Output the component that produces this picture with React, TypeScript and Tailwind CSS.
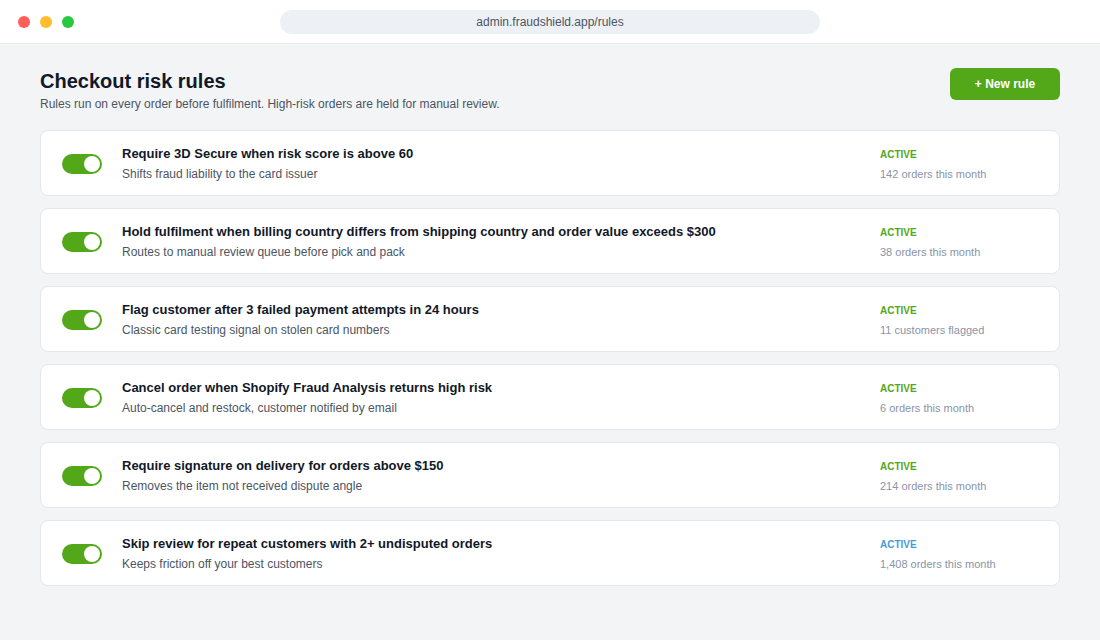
type Rule = {
  title: string;
  desc: string;
  status: 'green' | 'blue';
  stat: string;
};

const rules: Rule[] = [
  { title: 'Require 3D Secure when risk score is above 60', desc: 'Shifts fraud liability to the card issuer', status: 'green', stat: '142 orders this month' },
  { title: 'Hold fulfilment when billing country differs from shipping country and order value exceeds $300', desc: 'Routes to manual review queue before pick and pack', status: 'green', stat: '38 orders this month' },
  { title: 'Flag customer after 3 failed payment attempts in 24 hours', desc: 'Classic card testing signal on stolen card numbers', status: 'green', stat: '11 customers flagged' },
  { title: 'Cancel order when Shopify Fraud Analysis returns high risk', desc: 'Auto-cancel and restock, customer notified by email', status: 'green', stat: '6 orders this month' },
  { title: 'Require signature on delivery for orders above $150', desc: 'Removes the item not received dispute angle', status: 'green', stat: '214 orders this month' },
  { title: 'Skip review for repeat customers with 2+ undisputed orders', desc: 'Keeps friction off your best customers', status: 'blue', stat: '1,408 orders this month' },
];

function Toggle() {
  return (
    <div className="w-10 h-5 rounded-full bg-[#52a818] flex items-center justify-end px-[2px] shrink-0">
      <div className="w-4 h-4 rounded-full bg-white" />
    </div>
  );
}

export default function App() {
  return (
    <div className="w-[1100px] h-[640px] bg-[#f3f4f6] font-['Liberation_Sans',Arial,sans-serif] overflow-hidden">
      {/* Window chrome */}
      <div className="h-11 bg-white border-b border-[#e8ebef] flex items-center px-[18px]">
        <div className="flex gap-[10px]">
          <div className="w-3 h-3 rounded-full bg-[#ff5f57]" />
          <div className="w-3 h-3 rounded-full bg-[#febc2e]" />
          <div className="w-3 h-3 rounded-full bg-[#28c840]" />
        </div>
        <div className="ml-[206px] w-[540px] h-6 rounded-full bg-[#edf1f5] flex items-center justify-center text-xs text-[#4b5563]">
          admin.fraudshield.app/rules
        </div>
      </div>

      <div className="px-10 pt-6">
        {/* Header */}
        <div className="flex items-start justify-between">
          <div>
            <h1 className="text-[20px] leading-[26px] font-bold text-[#111827]">Checkout risk rules</h1>
            <p className="text-xs text-[#4b5563] mt-[2px]">
              Rules run on every order before fulfilment. High-risk orders are held for manual review.
            </p>
          </div>
          <button className="w-[110px] h-8 rounded-md bg-[#52a818] text-white text-xs font-bold">+ New rule</button>
        </div>

        {/* Rules */}
        <div className="mt-[18px] flex flex-col gap-3">
          {rules.map((r) => (
            <div key={r.title} className="h-[66px] bg-white border border-[#e5e7eb] rounded-lg flex items-center px-[21px] pt-[2px]">
              <Toggle />
              <div className="ml-5 flex-1 min-w-0">
                <p className="text-[13px] leading-4 font-bold text-[#111827]">{r.title}</p>
                <p className="text-xs leading-4 text-[#4b5563] mt-1">{r.desc}</p>
              </div>
              <div className="w-[158px] shrink-0">
                <p className={`text-[10px] leading-4 font-bold mt-[1px] ${r.status === 'green' ? 'text-[#52a818]' : 'text-[#4a9ad8]'}`}>ACTIVE</p>
                <p className="text-[11px] leading-4 text-[#8a94a6] mt-[3px]">{r.stat}</p>
              </div>
            </div>
          ))}
        </div>
      </div>
    </div>
  );
}
